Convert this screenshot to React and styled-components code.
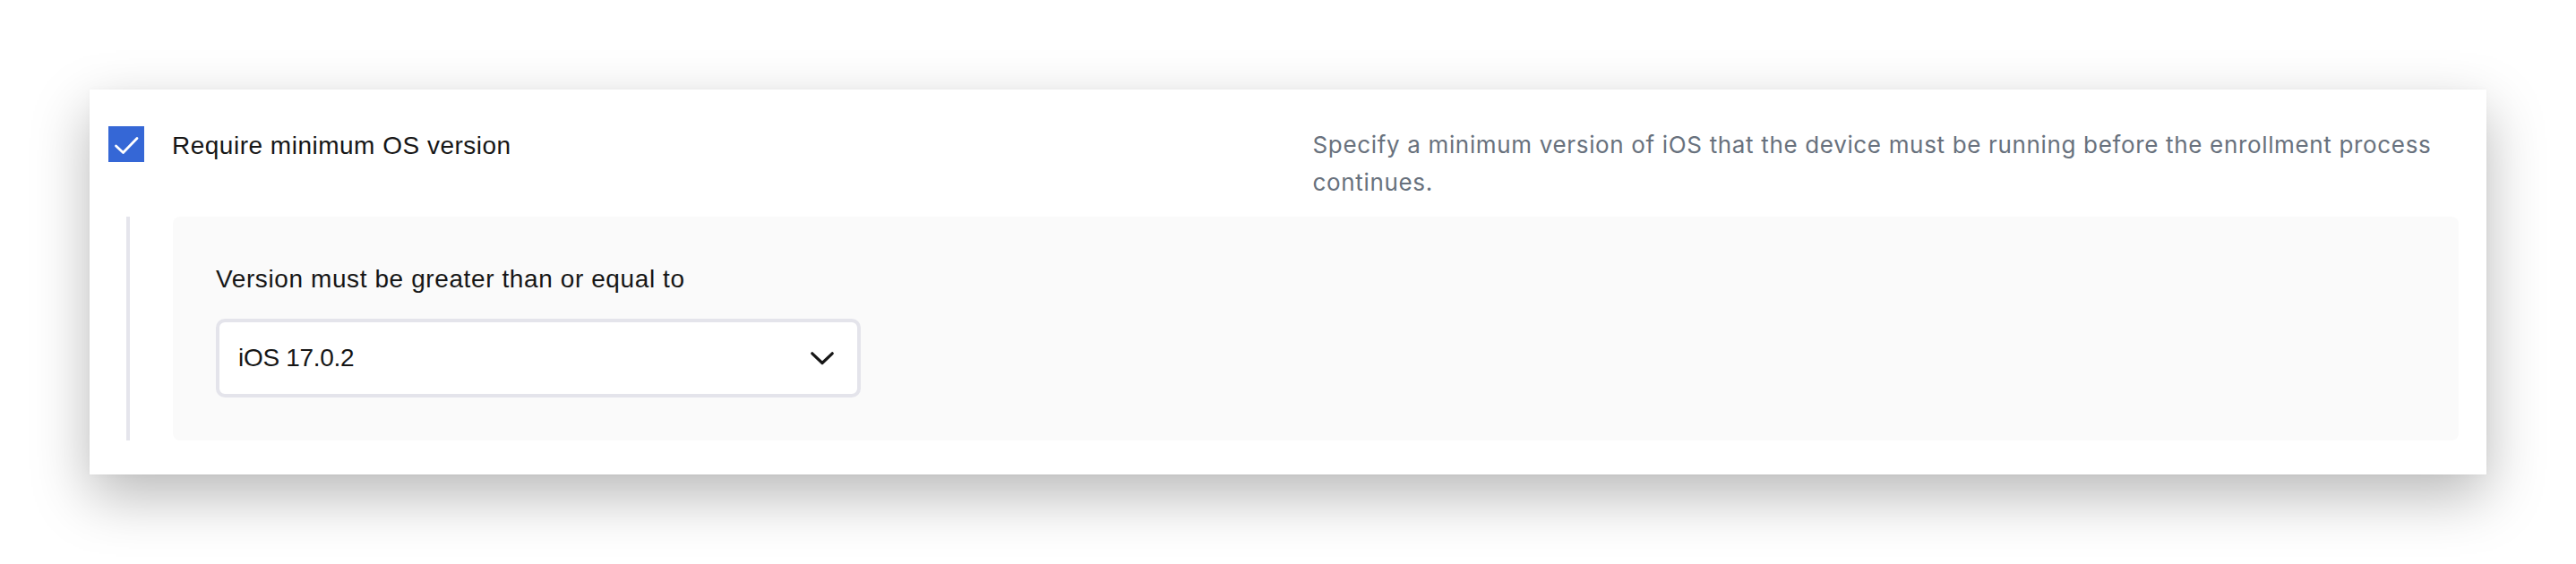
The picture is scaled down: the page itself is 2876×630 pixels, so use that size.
import styled, { createGlobalStyle } from 'styled-components';

const GlobalStyle = createGlobalStyle`
  body {
    margin: 0;
    background: #ffffff;
    font-family: "Liberation Sans", Arial, sans-serif;
    color: #161616;
  }
`;

function App() {
  return (
    <>
      <GlobalStyle />
      <Page>
        <Card>
          <OptionRow>
            <Checkbox>
              <svg width="40" height="40" viewBox="0 0 40 40" fill="none">
                <polyline points="8.5,22 16.5,29.5 32,13.5" stroke="#ffffff" strokeWidth="2.8" strokeLinecap="round" strokeLinejoin="round" />
              </svg>
            </Checkbox>
            <OptionLabel>Require minimum OS version</OptionLabel>
            <OptionHint>
              Specify a minimum version of iOS that the device must be running before the enrollment process continues.
            </OptionHint>
          </OptionRow>
          <NestedRow>
            <Rail />
            <Panel>
              <FieldLabel>Version must be greater than or equal to</FieldLabel>
              <Select>
                <SelectValue>iOS 17.0.2</SelectValue>
                <svg width="26" height="15" viewBox="0 0 26 15" fill="none">
                  <polyline points="1.8,1.8 13,12.5 24.2,1.8" stroke="#161616" strokeWidth="3.2" strokeLinecap="round" strokeLinejoin="round" />
                </svg>
              </Select>
            </Panel>
          </NestedRow>
        </Card>
      </Page>
    </>
  );
}

const Page = styled.div`
  padding: 100px 100px 100px;
`;

const Card = styled.div`
  box-sizing: border-box;
  width: 2676px;
  padding: 41px 31px 38px 21px;
  background: #ffffff;
  box-shadow: 0 24px 60px rgba(0, 0, 0, 0.28), 0 0 6px rgba(0, 0, 0, 0.03);
`;

const OptionRow = styled.div`
  display: grid;
  grid-template-columns: 71px 1fr 1fr;
  align-items: start;
`;

const Checkbox = styled.div`
  width: 40px;
  height: 40px;
  background: #3567d6;
  display: flex;
  align-items: center;
  justify-content: center;
`;

const OptionLabel = styled.div`
  font-size: 28px;
  line-height: 44px;
  letter-spacing: 0.5px;
  color: #161616;
`;

const OptionHint = styled.div`
  font-family: Inter, "Liberation Sans", sans-serif;
  font-size: 26px;
  line-height: 42px;
  letter-spacing: 0.66px;
  color: #68717d;
  margin-left: -3px;
`;

const NestedRow = styled.div`
  display: flex;
  margin: 17px 0 0 20px;
  gap: 48px;
`;

const Rail = styled.div`
  width: 4px;
  background: #e5e5ec;
  flex-shrink: 0;
`;

const Panel = styled.div`
  flex: 1;
  background: #fafafa;
  border-radius: 8px;
  padding: 48px;
`;

const FieldLabel = styled.div`
  font-size: 28px;
  line-height: 44px;
  letter-spacing: 0.6px;
  color: #161616;
`;

const Select = styled.div`
  box-sizing: border-box;
  width: 720px;
  height: 88px;
  margin-top: 22px;
  display: flex;
  align-items: center;
  justify-content: space-between;
  padding: 0 26px 0 21px;
  background: #ffffff;
  border: 4px solid #e4e4eb;
  border-radius: 10px;
`;

const SelectValue = styled.span`
  font-size: 28px;
  letter-spacing: -0.3px;
  color: #161616;
`;

export default App;
